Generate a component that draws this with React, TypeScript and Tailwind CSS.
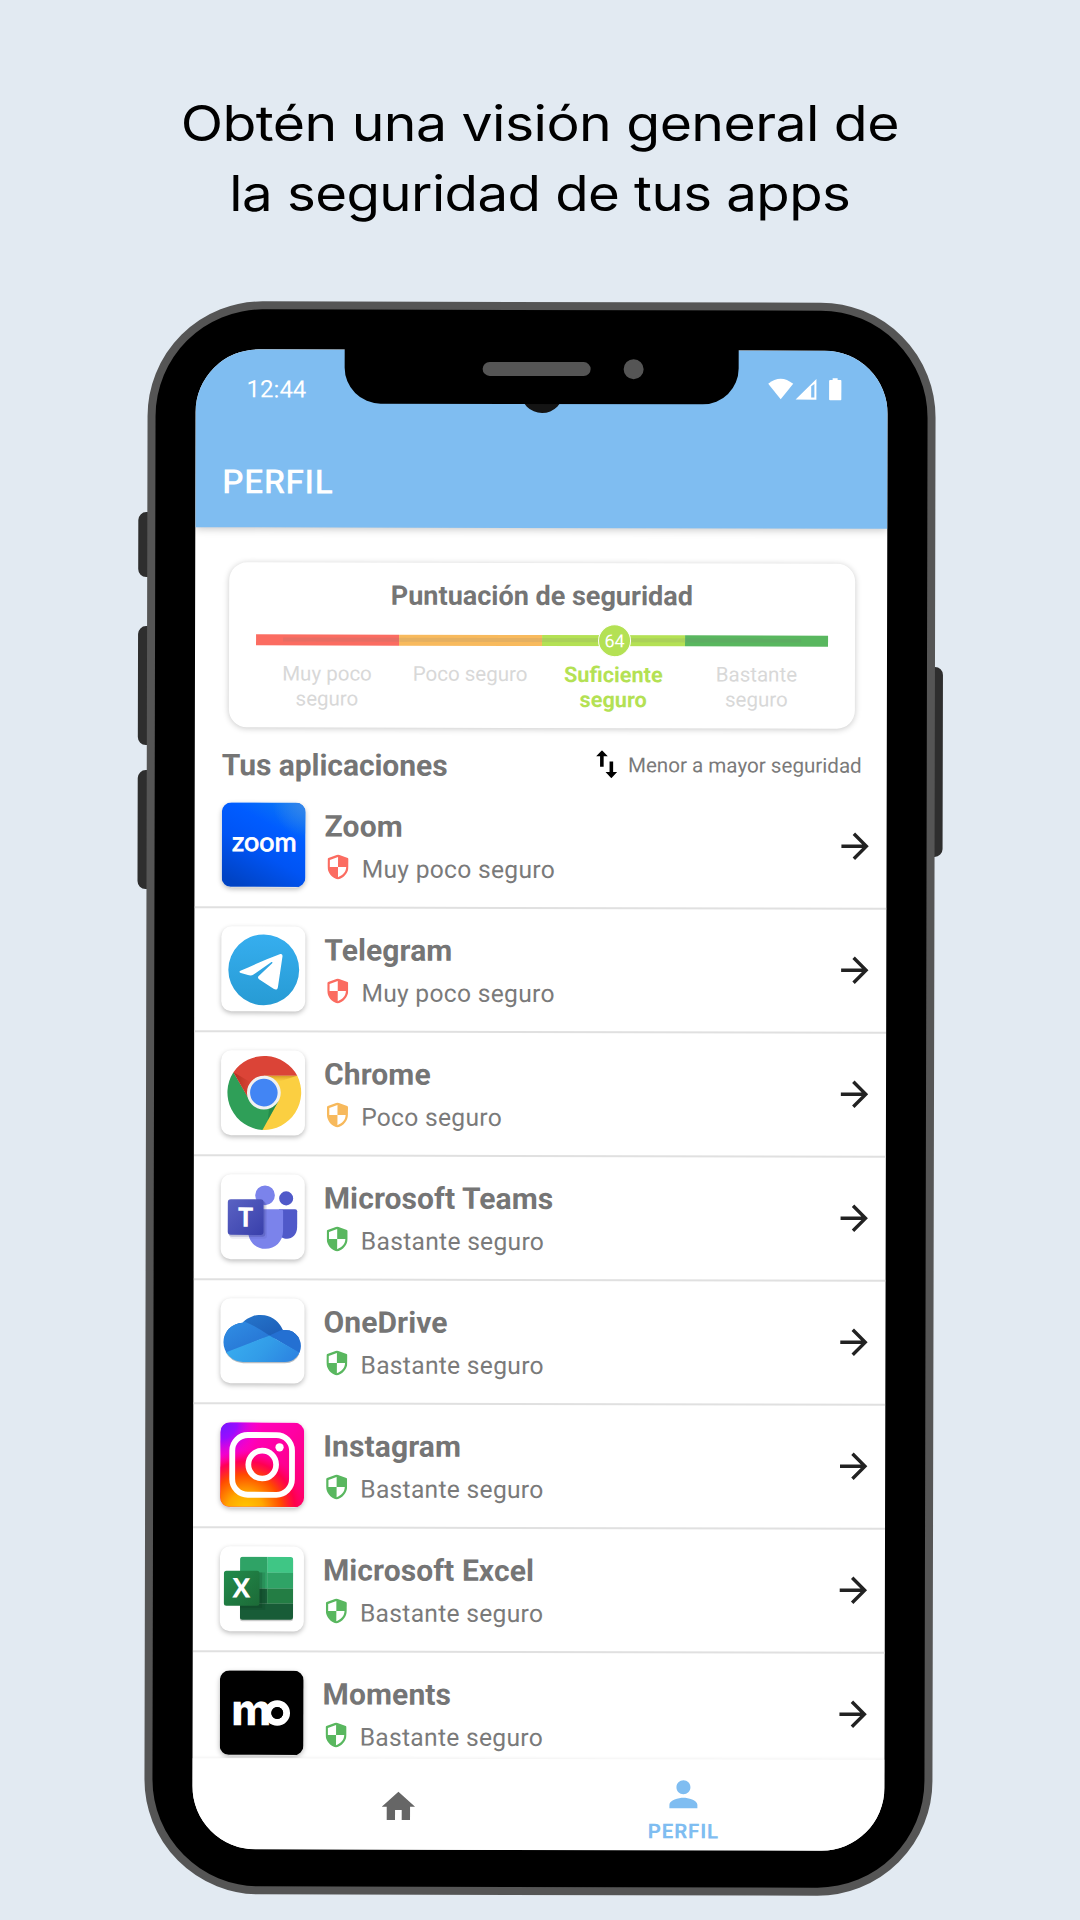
import React from "react";

type Level = "low" | "mid" | "high";

const shieldColor: Record<Level, string> = {
  low: "text-[#fb6c61]",
  mid: "text-[#f7b95c]",
  high: "text-[#59b75f]",
};

const levelText: Record<Level, string> = {
  low: "Muy poco seguro",
  mid: "Poco seguro",
  high: "Bastante seguro",
};

function Shield({ level }: { level: Level }) {
  return (
    <svg viewBox="3 1 18 22" preserveAspectRatio="none" className={`h-[25px] w-[21px] ${shieldColor[level]}`}>
      <path
        fill="currentColor"
        fillRule="evenodd"
        d="M12 1 L20.3 4.1 Q21 4.4 21 5.1 V11.5 C21 17.4 17 21.4 12 23 C7 21.4 3 17.4 3 11.5 V5.1 Q3 4.4 3.7 4.1 Z M12 3.2 L5 5.9 V12 H12 Z M12 12 V20.9 C16 19.4 18.9 16.3 19 12 Z"
      />
    </svg>
  );
}

function ArrowRight() {
  return (
    <svg viewBox="0 0 24 24" className="-mt-[2px] h-[41px] w-[41px] shrink-0" fill="#222">
      <path d="M12 4l-1.41 1.41L16.17 11H4v2h12.17l-5.58 5.59L12 20l8-8z" />
    </svg>
  );
}

function ZoomLogo() {
  return (
    <svg viewBox="0 0 84 84" className="h-full w-full">
      <defs>
        <linearGradient id="zm" x1="0.8" y1="0" x2="0.25" y2="1">
          <stop offset="0" stopColor="#0a78f5" />
          <stop offset="0.3" stopColor="#005cff" />
          <stop offset="0.6" stopColor="#0054f4" />
          <stop offset="1" stopColor="#0043c4" />
        </linearGradient>
        <radialGradient id="zm2" cx="1" cy="0" r="0.4">
          <stop offset="0" stopColor="#3a86e8" />
          <stop offset="1" stopColor="#3a86e8" stopOpacity="0" />
        </radialGradient>
      </defs>
      <rect width="84" height="84" fill="url(#zm)" />
      <rect width="84" height="84" fill="url(#zm2)" />
      <text
        x="10.5"
        y="48.5"
        fontFamily="Lato, sans-serif"
        fontWeight="400"
        fontSize="26.5"
        textLength="64"
        lengthAdjust="spacingAndGlyphs"
        fill="#fff"
        stroke="#fff"
        strokeWidth="0.8"
      >
        zoom
      </text>
    </svg>
  );
}

function TelegramLogo() {
  return (
    <svg viewBox="0 0 84 84" className="h-full w-full">
      <defs>
        <linearGradient id="tg" x1="0" y1="0" x2="0" y2="1">
          <stop offset="0" stopColor="#36aeef" />
          <stop offset="1" stopColor="#279bd4" />
        </linearGradient>
      </defs>
      <circle cx="42.2" cy="43.2" r="35.2" fill="url(#tg)" />
      <path
        fill="#fff"
        d="M19 44.2 C32 38.4 45 32.5 58 27.7 C60 27 61 28 60.8 30 L56.4 60 C56 63 54.3 63.5 52 62 L37.5 52.5 C36 51.3 36.3 50 37.5 49 L50.6 36.6 C51.5 35.4 50.2 35 49.2 35.8 L32.5 47.6 C30.5 49 28.5 49 26.5 48.4 L19.5 46.4 C17.7 45.8 17.7 44.8 19 44.2Z"
      />
    </svg>
  );
}

function ChromeLogo() {
  return (
    <svg viewBox="0 0 84 84" className="h-full w-full">
      <defs>
        <linearGradient id="cr" x1="0" y1="0" x2="1" y2="0">
          <stop offset="0" stopColor="#a52714" stopOpacity="0.7" />
          <stop offset="1" stopColor="#a52714" stopOpacity="0" />
        </linearGradient>
        <linearGradient id="cy" x1="0" y1="0" x2="0" y2="1">
          <stop offset="0" stopColor="#c98a1a" stopOpacity="0.75" />
          <stop offset="1" stopColor="#e5a72a" stopOpacity="0" />
        </linearGradient>
      </defs>
      <path fill="#fbcf41" d="M75.8 25.2 A37.3 37.3 0 0 1 41.3 79.1 L42 42 V25.2Z" />
      <path fill="#2f9f58" d="M12.3 21.7 L27 47 L57 50.5 L41.3 79.1 A37.3 37.3 0 0 1 12.3 21.7Z" />
      <path fill="#1c7a3e" opacity="0.5" d="M48 57 L57 50.5 L46.5 69.5Z" />
      <path fill="#db4437" d="M12.3 21.7 A37.3 37.3 0 0 1 75.8 25.2 H42.6 V42 L26.6 46.6Z" />
      <path fill="url(#cr)" d="M12.3 21.7 L26.6 46.6 L30 32Z" />
      <path fill="url(#cy)" d="M42.6 25.2 H75.8 L58 31Z" />
      <circle cx="42.6" cy="42" r="16.8" fill="#f1f1f1" />
      <circle cx="42.6" cy="42" r="13.7" fill="#4285f4" />
    </svg>
  );
}

function TeamsLogo() {
  return (
    <svg viewBox="0 0 84 84" className="h-full w-full">
      <defs>
        <linearGradient id="tm" x1="0" y1="0" x2="1" y2="1">
          <stop offset="0" stopColor="#5a62c3" />
          <stop offset="1" stopColor="#3940ab" />
        </linearGradient>
      </defs>
      <circle cx="65" cy="23.8" r="7" fill="#5059c9" />
      <path d="M58 34.7 H74 Q76 34.7 76 36.7 V52 C76 60 71 64 66 64 C62 64 59 62 58 59Z" fill="#5059c9" />
      <circle cx="44" cy="20.8" r="9.8" fill="#7b83eb" />
      <path d="M27.3 34.7 H60 Q62 34.7 62 36.7 V56 C62 67 54 74 44.6 74 C35 74 27.3 67 27.3 56Z" fill="#7b83eb" />
      <rect x="9" y="28" width="37" height="36" rx="3" fill="#252a70" opacity="0.08" />
      <rect x="8" y="26.5" width="36.4" height="35.5" rx="3" fill="#252a70" opacity="0.22" />
      <rect x="7" y="24.8" width="35.6" height="35.4" rx="3" fill="url(#tm)" />
      <text x="24.8" y="52.2" textAnchor="middle" fontFamily="'Open Sans', sans-serif" fontWeight="700" fontSize="27" fill="#fff">
        T
      </text>
    </svg>
  );
}

function OneDriveLogo() {
  return (
    <svg viewBox="0 0 84 84" className="h-full w-full">
      <defs>
        <linearGradient id="od1" x1="0" y1="0" x2="1" y2="1">
          <stop offset="0" stopColor="#2b86d9" />
          <stop offset="1" stopColor="#1a55b0" />
        </linearGradient>
        <linearGradient id="od2" x1="0" y1="0" x2="0.6" y2="1">
          <stop offset="0" stopColor="#3397ea" />
          <stop offset="1" stopColor="#2673d3" />
        </linearGradient>
        <linearGradient id="od3" x1="0" y1="0.4" x2="1" y2="0.7">
          <stop offset="0" stopColor="#39aef0" />
          <stop offset="0.5" stopColor="#329ce8" />
          <stop offset="1" stopColor="#2b7fe0" />
        </linearGradient>
        <clipPath id="cloud">
          <path d="M22.7 63.2 A19.5 19.5 0 0 1 3 43.7 A19.5 19.5 0 0 1 22 24.3 A24 24 0 0 1 62 31.4 A16 16 0 0 1 80 47.4 A16 16 0 0 1 64 63.2Z" />
        </clipPath>
      </defs>
      <path d="M22.7 63.4 A19.6 19.6 0 0 1 5 52 L78.5 54 A16 16 0 0 1 64 63.4Z" transform="translate(0 1.1)" fill="#123" opacity="0.3" />
      <g clipPath="url(#cloud)">
        <rect width="84" height="40" fill="url(#od1)" />
        <path d="M0 10 L15 20 Q30 24 48.7 37 L0 58Z" fill="url(#od2)" />
        <path d="M48.7 37 L66 29 L84 29 V58Z" fill="#2470d2" />
        <path d="M0 56 L48.7 37 L84 57 V66 H0Z" fill="url(#od3)" />
      </g>
    </svg>
  );
}

function InstagramLogo() {
  return (
    <svg viewBox="0 0 84 84" className="h-full w-full">
      <defs>
        <linearGradient id="ig0" x1="0" y1="0" x2="0.9" y2="1">
          <stop offset="0" stopColor="#ff00d0" />
          <stop offset="0.45" stopColor="#ff00a8" />
          <stop offset="1" stopColor="#ff0069" />
        </linearGradient>
        <radialGradient id="ig1" cx="0.3" cy="1.05" r="0.72">
          <stop offset="0" stopColor="#ffcc00" />
          <stop offset="0.3" stopColor="#ffa800" />
          <stop offset="0.6" stopColor="#ff4a00" />
          <stop offset="0.82" stopColor="#ff0040" stopOpacity="0.8" />
          <stop offset="1" stopColor="#ff0069" stopOpacity="0" />
        </radialGradient>
        <radialGradient id="ig2" cx="0" cy="0" r="0.5">
          <stop offset="0" stopColor="#6a1bff" />
          <stop offset="0.4" stopColor="#9a0cff" />
          <stop offset="1" stopColor="#ff00e0" stopOpacity="0" />
        </radialGradient>
      </defs>
      <rect width="84" height="84" fill="url(#ig0)" />
      <rect width="84" height="84" fill="url(#ig1)" />
      <rect width="84" height="84" fill="url(#ig2)" />
      <rect x="12" y="12.6" width="59.4" height="59.4" rx="15.5" fill="none" stroke="#fff" strokeWidth="5.8" />
      <circle cx="41.8" cy="42" r="13.8" fill="none" stroke="#fff" strokeWidth="5.7" />
      <circle cx="59" cy="24.7" r="4.1" fill="#fff" />
    </svg>
  );
}

function ExcelLogo() {
  return (
    <svg viewBox="0 0 84 84" className="h-full w-full">
      <defs>
        <linearGradient id="xl" x1="0" y1="0" x2="1" y2="1">
          <stop offset="0" stopColor="#228c4c" />
          <stop offset="1" stopColor="#1c6a37" />
        </linearGradient>
        <clipPath id="sheet">
          <rect x="20" y="10.4" width="52.8" height="62.6" rx="2.5" />
        </clipPath>
      </defs>
      <rect x="20" y="12" width="52.8" height="62.4" rx="2.5" fill="#000" opacity="0.2" />
      <g clipPath="url(#sheet)">
        <rect x="20" y="10" width="27" height="32" fill="#2fa366" />
        <rect x="47" y="10" width="26" height="16.3" fill="#3fc685" />
        <rect x="47" y="26.3" width="26" height="15.7" fill="#2fa366" />
        <rect x="20" y="42" width="27" height="15" fill="#185c37" />
        <rect x="47" y="42" width="26" height="15" fill="#237d44" />
        <rect x="20" y="57" width="53" height="17" fill="#185c37" />
        <rect x="20" y="26" width="25" height="37" fill="#08301a" opacity="0.15" />
        <rect x="20" y="26" width="22" height="35" fill="#08301a" opacity="0.2" />
      </g>
      <rect x="4" y="24.2" width="35.4" height="34.8" rx="2.5" fill="url(#xl)" />
      <text x="21.4" y="50.8" textAnchor="middle" fontFamily="'Open Sans', sans-serif" fontWeight="700" fontSize="27" fill="#fff">
        X
      </text>
    </svg>
  );
}

function MomentsLogo() {
  return (
    <svg viewBox="0 0 84 84" className="h-full w-full">
      <rect width="84" height="84" fill="#000" />
      <text x="11.5" y="54.7" fontFamily="Inter, sans-serif" fontWeight="800" fontSize="43" fill="#fff">
        m
      </text>
      <circle cx="57.3" cy="42.3" r="9.3" fill="none" stroke="#fff" strokeWidth="6.8" />
      <circle cx="57.3" cy="42.3" r="5.9" fill="#000" />
    </svg>
  );
}

const apps: { name: string; level: Level; Logo: () => React.ReactElement }[] = [
  { name: "Zoom", level: "low", Logo: ZoomLogo },
  { name: "Telegram", level: "low", Logo: TelegramLogo },
  { name: "Chrome", level: "mid", Logo: ChromeLogo },
  { name: "Microsoft Teams", level: "high", Logo: TeamsLogo },
  { name: "OneDrive", level: "high", Logo: OneDriveLogo },
  { name: "Instagram", level: "high", Logo: InstagramLogo },
  { name: "Microsoft Excel", level: "high", Logo: ExcelLogo },
  { name: "Moments", level: "high", Logo: MomentsLogo },
];

function AppRow({ name, level, Logo }: (typeof apps)[number]) {
  return (
    <li className="flex h-[124px] shrink-0 items-center border-b-2 border-[#e0e0e0] pr-[11px] pl-[27px]">
      <div className="-mt-[1.5px] h-[84.5px] w-[84.5px] shrink-0 overflow-hidden rounded-[10px] bg-white shadow-[0_2px_5px_rgba(0,0,0,0.26)]">
        <Logo />
      </div>
      <div className="ml-[19px] flex-1 pt-[1px]">
        <div className="text-[30px] leading-[36px] font-bold tracking-[0.1px] text-[#757575]">{name}</div>
        <div className="mt-[10px] flex h-[30px] items-center">
          <div className="ml-[3px] -mt-[4px]">
            <Shield level={level} />
          </div>
          <span className="ml-[13.2px] text-[24.6px] leading-[30px] tracking-[0.3px] text-[#7a7a7a]">{levelText[level]}</span>
        </div>
      </div>
      <ArrowRight />
    </li>
  );
}

function Header() {
  return (
    <header className="z-10 flex h-[178.5px] shrink-0 flex-col bg-[#7fbdf1] text-white shadow-[0_1px_9px_rgba(0,0,0,0.25)]">
      <div className="mt-[28px] flex h-[24px] items-center pr-[46px] pl-[51.5px]">
        <span className="flex-1 text-[24px] leading-[24px]">12:44</span>
        <svg viewBox="0 0 74 24" className="-mt-[1px] h-[24px] w-[74px]" fill="#fff">
          <path d="M0.6 6.2 Q13 -4 25.6 6.2 L13.1 21.8Z" />
          <path fillRule="evenodd" d="M28 22 L48.8 1.4 V22Z M43.6 8.6 V20 H46.8 V6.5Z" />
          <path d="M61.5 3.4 Q61.5 2.4 62.5 2.4 H65 V0.6 H70 V2.4 H73 Q74 2.4 74 3.4 V21.6 Q74 22.6 73 22.6 H62.5 Q61.5 22.6 61.5 21.6Z" />
        </svg>
      </div>
      <h2 className="mt-[61px] pl-[27.5px] text-[33.5px] leading-[40px] font-medium tracking-[0.6px]">PERFIL</h2>
    </header>
  );
}

function ScoreCard() {
  return (
    <section className="mt-[34.5px] mr-[32px] ml-[34.5px] h-[165px] shrink-0 rounded-[18px] bg-white px-[26.5px] pt-[17px] shadow-[0_1px_6px_rgba(0,0,0,0.22)]">
      <h3 className="text-center text-[27px] leading-[32px] font-bold text-[#757575]">Puntuación de seguridad</h3>
      <div className="relative mt-[23px] grid h-[11px] grid-cols-4">
        <div className="bg-[#fb6c61]" />
        <div className="bg-[#f8ba5d]" />
        <div className="bg-[#b4e154]" />
        <div className="bg-[#59b75f]" />
        <div className="absolute inset-x-[27px] top-[3px] h-[4px] bg-[#777]/15" />
        <div className="absolute top-[-11px] left-[342.5px] flex h-[33px] w-[33px] items-center justify-center rounded-full border border-white bg-[#b4e154] pt-[2px] text-[18px] leading-none text-white">
          64
        </div>
      </div>
      <div className="mt-[16px] grid grid-cols-4 text-center text-[20.5px] leading-[25px] text-[#d8d8d8]">
        <div>Muy poco<br />seguro</div>
        <div>Poco seguro</div>
        <div className="text-[21.7px] leading-[25.5px] font-bold text-[#b4e154]">Suficiente<br />seguro</div>
        <div>Bastante<br />seguro</div>
      </div>
    </section>
  );
}

function SortBar() {
  return (
    <div className="flex h-[57.5px] shrink-0 items-start pt-[20px] pr-[24.5px] pl-[27.5px]">
      <h3 className="flex-1 text-[30px] leading-[36px] font-bold tracking-[-0.05px] text-[#757575]">Tus aplicaciones</h3>
      <svg viewBox="0 0 22 28" className="mt-[2px] h-[28px] w-[22px]" fill="#000">
        <path d="M6.2 0 L12 6.2 H7.9 V16.5 H4.3 V6.2 H0.4Z" />
        <path d="M15.6 28 L9.8 21.8 H13.8 V11.3 H17.4 V21.8 H21.4Z" />
      </svg>
      <span className="ml-[10.5px] text-[20.6px] leading-[34px] text-[#7a7a7a]">Menor a mayor seguridad</span>
    </div>
  );
}

function BottomNav() {
  return (
    <nav className="z-10 flex h-[91px] shrink-0 bg-white pl-[64.5px] shadow-[0_-1px_3px_rgba(0,0,0,0.06)]">
      <div className="flex w-[284px] justify-center pt-[28px]">
        <svg viewBox="0 0 24 24" className="h-[40px] w-[40px]" fill="#666">
          <path d="M10 20v-6h4v6h5v-8h3L12 3 2 12h3v8z" />
        </svg>
      </div>
      <div className="flex w-[285px] flex-col items-center pt-[14px] text-[#7fbdf1]">
        <svg viewBox="0 0 24 24" className="h-[42px] w-[42px]" fill="currentColor">
          <path d="M12 12c2.21 0 4-1.79 4-4s-1.79-4-4-4-4 1.79-4 4 1.79 4 4 4zm0 2c-2.67 0-8 1.34-8 4v2h16v-2c0-2.66-5.33-4-8-4z" />
        </svg>
        <span className="mt-[4px] pl-[1px] text-[20.5px] leading-[24px] font-bold tracking-[0.8px]">PERFIL</span>
      </div>
    </nav>
  );
}

export default function App() {
  return (
    <main className="flex h-[1920px] w-[1080px] flex-col items-center overflow-hidden bg-[#e2eaf2] font-[Roboto,sans-serif]">
      <h1 className="h-[302px] shrink-0 pt-[89px] text-center font-[Inter,sans-serif] text-[49px] leading-[70px] font-normal tracking-[-0.5px] whitespace-nowrap text-black">
        <span className="block scale-x-[1.13]">Obtén una visión general de</span>
        <span className="block scale-x-[1.114]">la seguridad de tus apps</span>
      </h1>
      <div className="relative h-[1593px] w-[788px] shrink-0 rotate-[0.13deg]">
        <div className="absolute top-[211px] left-[-9px] h-[65px] w-[20px] rounded-[8px] bg-[#2e2e2e]" />
        <div className="absolute top-[325px] left-[-9px] h-[119px] w-[20px] rounded-[8px] bg-[#2e2e2e]" />
        <div className="absolute top-[469px] left-[-9px] h-[119px] w-[20px] rounded-[8px] bg-[#2e2e2e]" />
        <div className="absolute top-[364px] right-[-8px] h-[190px] w-[20px] rounded-[8px] bg-[#2e2e2e]" />
        <div className="relative h-full rounded-[115px] border-[8px] border-[#555] bg-[#555]">
          <div className="h-full rounded-[107px] bg-black pt-[39.5px] pr-[40.5px] pb-[37.5px] pl-[39.5px]">
            <div className="relative h-full">
              <div className="flex h-full flex-col overflow-hidden rounded-[63px] bg-white">
                <Header />
                <ScoreCard />
                <SortBar />
                <ul className="flex min-h-0 flex-1 flex-col overflow-hidden">
                  {apps.map((app) => (
                    <AppRow key={app.name} {...app} />
                  ))}
                </ul>
                <BottomNav />
              </div>
              <div className="absolute top-[20px] left-[325.5px] z-20 h-[43px] w-[43px] rounded-full bg-[#141414]" />
              <div className="absolute top-[-4px] left-[149px] z-20 flex h-[58px] w-[394.5px] rounded-b-[36px] bg-black">
                <div className="mt-[16.5px] ml-[138.5px] h-[14px] w-[107.5px] rounded-full bg-[#555]" />
                <div className="mt-[13.5px] ml-[33.5px] h-[20px] w-[20px] rounded-full bg-[#555]" />
              </div>
            </div>
          </div>
        </div>
      </div>
    </main>
  );
}
